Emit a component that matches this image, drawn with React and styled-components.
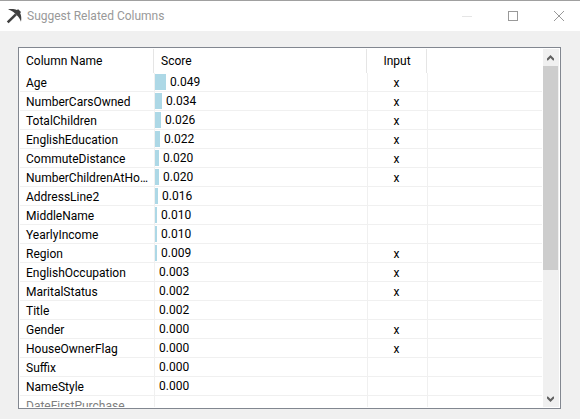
import React from "react";
import styled, { createGlobalStyle } from "styled-components";

const GlobalStyle = createGlobalStyle`
  * {
    box-sizing: border-box;
  }

  body {
    margin: 0;
    font-family: Roboto, "Open Sans", sans-serif;
    font-size: 12px;
    color: #000;
  }
`;

const Window = styled.div`
  display: flex;
  flex-direction: column;
  height: 100vh;
  border-top: 1px solid #a0a0a0;
  background-color: #f0f0f0;
`;

const TitleBar = styled.header`
  display: flex;
  align-items: center;
  flex: none;
  height: 30px;
  padding-left: 6px;
  background-color: #fff;
`;

const Title = styled.h1`
  flex: 1;
  margin: 0 0 0 5px;
  font-size: 12px;
  font-weight: normal;
  color: #999;
`;

const WindowButtons = styled.div`
  display: flex;
  gap: 4px;
`;

const WindowButton = styled.button`
  display: flex;
  align-items: center;
  justify-content: center;
  width: 42px;
  height: 30px;
  padding: 0;
  border: none;
  background: none;
  color: ${({ disabled }) => (disabled ? "#e5e5e5" : "#999")};
`;

const ListBox = styled.main`
  display: flex;
  flex: 1;
  gap: 1px;
  min-height: 0;
  margin: 16px 19px 10px 18px;
  padding: 1px;
  border: 1px solid #828790;
  background-color: #fff;
`;

const TableArea = styled.div`
  flex: 1;
  overflow: hidden;
`;

const Table = styled.table`
  width: 100%;
  table-layout: fixed;
  border-spacing: 0;
`;

const Column = styled.col`
  width: ${({ $width }) => $width};
`;

const HeaderCell = styled.th`
  height: 24px;
  padding: 0 1px 0 0;
  font-weight: normal;
  text-align: ${({ $align }) => $align || "left"};
`;

const HeaderLabel = styled.div`
  height: 24px;
  padding: 0 6px;
  border-right: 1px solid #e5e5e5;
  line-height: 24px;
`;

const Cell = styled.td`
  height: 19px;
  padding: ${({ $pad }) => $pad || "0"};
  border-right: 1px solid #f0f0f0;
  border-bottom: 1px solid #f0f0f0;
  line-height: 16px;
  text-align: ${({ $align }) => $align || "left"};
  white-space: nowrap;
  overflow: hidden;
  text-overflow: ellipsis;
  color: ${({ $muted }) => ($muted ? "#808080" : "#000")};

  &:last-child {
    border-right: none;
  }
`;

const Score = styled.div`
  display: flex;
  align-items: center;
  gap: 4px;
  height: 18px;
`;

const ScoreBar = styled.div`
  height: 16px;
  background-color: #add8e6;
`;

const ScrollBar = styled.div`
  display: flex;
  flex-direction: column;
  flex: none;
  width: 16px;
  background-color: #f0f0f0;
`;

const ScrollButton = styled.button`
  display: flex;
  align-items: center;
  justify-content: center;
  width: 15px;
  height: 17px;
  padding: 0;
  border: none;
  background: none;
  color: #606060;
`;

const ScrollTrack = styled.div`
  flex: 1;
`;

const ScrollThumb = styled.div`
  width: 15px;
  height: 63%;
  background-color: #cdcdcd;
`;

const rows = [
  { name: "Age", score: "0.049", bar: 11, input: true },
  { name: "NumberCarsOwned", score: "0.034", bar: 7, input: true },
  { name: "TotalChildren", score: "0.026", bar: 6, input: true },
  { name: "EnglishEducation", score: "0.022", bar: 5, input: true },
  { name: "CommuteDistance", score: "0.020", bar: 4, input: true },
  { name: "NumberChildrenAtHome", score: "0.020", bar: 4, input: true },
  { name: "AddressLine2", score: "0.016", bar: 3 },
  { name: "MiddleName", score: "0.010", bar: 2 },
  { name: "YearlyIncome", score: "0.010", bar: 2 },
  { name: "Region", score: "0.009", bar: 2, input: true },
  { name: "EnglishOccupation", score: "0.003", bar: 0, input: true },
  { name: "MaritalStatus", score: "0.002", bar: 0, input: true },
  { name: "Title", score: "0.002", bar: 0 },
  { name: "Gender", score: "0.000", bar: 0, input: true },
  { name: "HouseOwnerFlag", score: "0.000", bar: 0, input: true },
  { name: "Suffix", score: "0.000", bar: 0 },
  { name: "NameStyle", score: "0.000", bar: 0 },
  { name: "DateFirstPurchase", muted: true },
];

const PickaxeIcon = () => (
  <svg width="16" height="16" viewBox="0 0 16 16" fill="#404040">
    <path d="M0.8 13.6L9 5.4L10.8 7.2L2.6 15.2Z" />
    <path d="M2 1.4C5 0.6 8.500 0.800 10.800 2L12.200 1.200L15 4L14.200 5.200C15.400 7.500 15.600 10.600 15 13.800C14 10.800 12.600 8.800 10.800 7.200L9 5.400C7.400 3.600 5.400 2.200 2 1.400Z" />
  </svg>
);

const MinimizeIcon = () => (
  <svg width="10" height="10" stroke="currentColor">
    <path d="M0 5.5H10" />
  </svg>
);

const MaximizeIcon = () => (
  <svg width="10" height="10" fill="none" stroke="currentColor">
    <rect x="0.5" y="0.5" width="9" height="9" />
  </svg>
);

const CloseIcon = () => (
  <svg width="10" height="10" stroke="currentColor">
    <path d="M0 0L10 10M10 0L0 10" />
  </svg>
);

const ChevronUp = () => (
  <svg width="7" height="6" fill="none" stroke="currentColor" strokeWidth="2">
    <path d="M0 5L3.5 1.5L7 5" />
  </svg>
);

const ChevronDown = () => (
  <svg width="7" height="6" fill="none" stroke="currentColor" strokeWidth="2">
    <path d="M0 1L3.5 4.5L7 1" />
  </svg>
);

const Row = ({ name, score, bar, input, muted }) => (
  <tr>
    <Cell $pad="2px 0 0 6px" $muted={muted}>
      {name}
    </Cell>
    <Cell>
      {score && (
        <Score>
          <ScoreBar style={{ width: bar }} />
          {score}
        </Score>
      )}
    </Cell>
    <Cell $pad="2px 2px 0 0" $align="center">
      {input && "x"}
    </Cell>
    <Cell />
  </tr>
);

const App = () => {
  return (
    <Window>
      <GlobalStyle />
      <TitleBar>
        <PickaxeIcon />
        <Title>Suggest Related Columns</Title>
        <WindowButtons>
          <WindowButton aria-label="Minimize" disabled>
            <MinimizeIcon />
          </WindowButton>
          <WindowButton aria-label="Maximize">
            <MaximizeIcon />
          </WindowButton>
          <WindowButton aria-label="Close">
            <CloseIcon />
          </WindowButton>
        </WindowButtons>
      </TitleBar>
      <ListBox>
        <TableArea>
          <Table>
            <colgroup>
              <Column $width="135px" />
              <Column $width="213px" />
              <Column $width="60px" />
              <Column $width="auto" />
            </colgroup>
            <thead>
              <tr>
                <HeaderCell>
                  <HeaderLabel>Column Name</HeaderLabel>
                </HeaderCell>
                <HeaderCell>
                  <HeaderLabel>Score</HeaderLabel>
                </HeaderCell>
                <HeaderCell $align="center">
                  <HeaderLabel>Input</HeaderLabel>
                </HeaderCell>
                <HeaderCell />
              </tr>
            </thead>
            <tbody>
              {rows.map((row) => (
                <Row key={row.name} {...row} />
              ))}
            </tbody>
          </Table>
        </TableArea>
        <ScrollBar>
          <ScrollButton aria-label="Scroll up">
            <ChevronUp />
          </ScrollButton>
          <ScrollTrack>
            <ScrollThumb />
          </ScrollTrack>
          <ScrollButton aria-label="Scroll down">
            <ChevronDown />
          </ScrollButton>
        </ScrollBar>
      </ListBox>
    </Window>
  );
};

export default App;
